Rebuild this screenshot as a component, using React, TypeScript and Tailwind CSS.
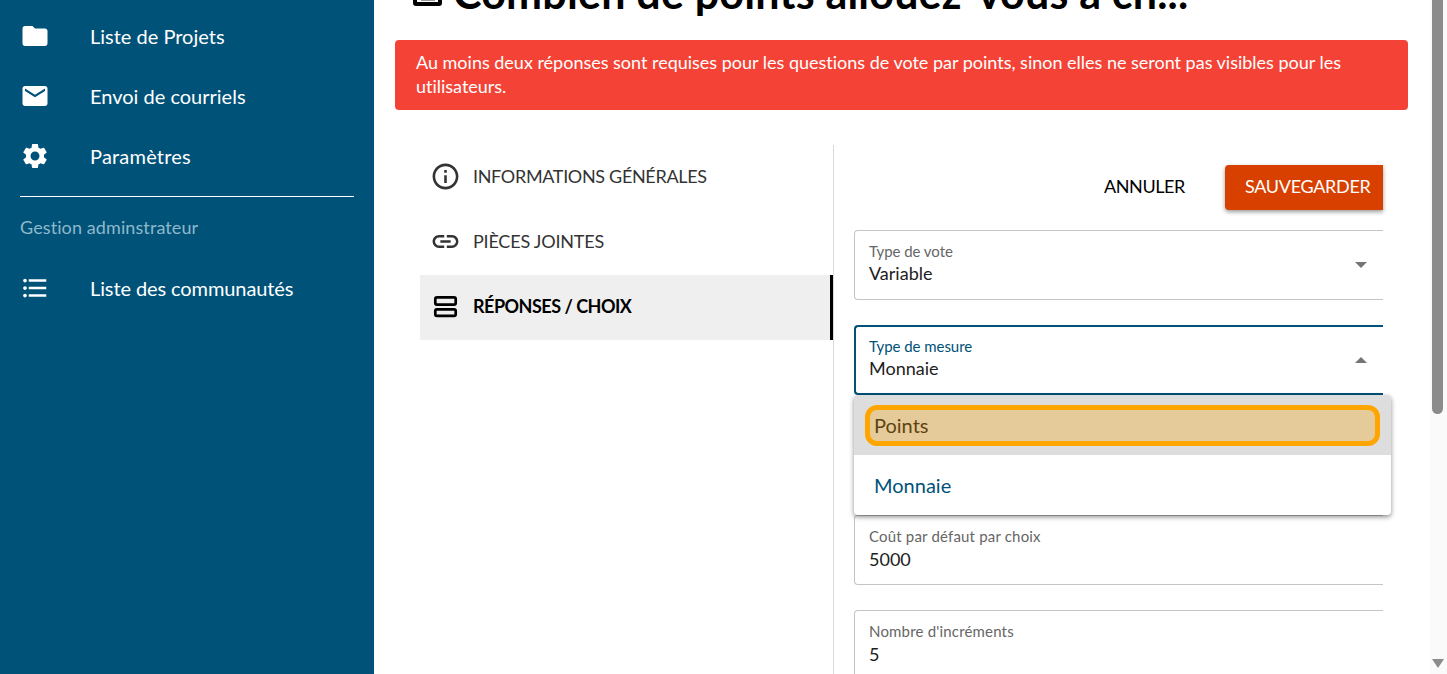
import { useState } from "react";

const LATO = "font-['Lato','Liberation_Sans',sans-serif]";

function MdIcon({ d, className = "" }: { d: string; className?: string }) {
  return (
    <svg aria-hidden="true" className={className} fill="currentColor" viewBox="0 0 24 24">
      <path d={d} />
    </svg>
  );
}

const icons = {
  folder: "M10 4H4c-1.1 0-1.99.9-1.99 2L2 18c0 1.1.9 2 2 2h16c1.1 0 2-.9 2-2V8c0-1.1-.9-2-2-2h-8l-2-2z",
  mail: "M20 4H4c-1.1 0-1.99.9-1.99 2L2 18c0 1.1.9 2 2 2h16c1.1 0 2-.9 2-2V6c0-1.1-.9-2-2-2zm0 4l-8 5-8-5V6l8 5 8-5v2z",
  gear: "M19.14 12.94c.04-.3.06-.61.06-.94 0-.32-.02-.64-.07-.94l2.03-1.58c.18-.14.23-.41.12-.61l-1.92-3.32c-.12-.22-.37-.29-.59-.22l-2.39.96c-.5-.38-1.03-.7-1.62-.94l-.36-2.54c-.04-.24-.24-.41-.48-.41h-3.84c-.24 0-.43.17-.47.41l-.36 2.54c-.59.24-1.13.57-1.62.94l-2.39-.96c-.22-.08-.47 0-.59.22L2.74 8.87c-.12.21-.08.47.12.61l2.03 1.58c-.05.3-.09.63-.09.94s.02.64.07.94l-2.03 1.58c-.18.14-.23.41-.12.61l1.92 3.32c.12.22.37.29.59.22l2.39-.96c.5.38 1.03.7 1.62.94l.36 2.54c.05.24.24.41.48.41h3.84c.24 0 .44-.17.47-.41l.36-2.54c.59-.24 1.13-.56 1.62-.94l2.39.96c.22.08.47 0 .59-.22l1.92-3.32c.12-.22.07-.47-.12-.61l-2.01-1.58zM12 15.6c-1.98 0-3.6-1.62-3.6-3.6s1.62-3.6 3.6-3.6 3.6 1.62 3.6 3.6-1.62 3.6-3.6 3.6z",
  list: "M4 10.5c-.83 0-1.5.67-1.5 1.5s.67 1.5 1.5 1.5 1.5-.67 1.5-1.5-.67-1.5-1.5-1.5zm0-6c-.83 0-1.5.67-1.5 1.5S3.17 7.5 4 7.5 5.5 6.83 5.5 6 4.83 4.5 4 4.5zm0 12c-.83 0-1.5.68-1.5 1.5s.68 1.5 1.5 1.5 1.5-.68 1.5-1.5-.67-1.5-1.5-1.5zM7 19h14v-2H7v2zm0-6h14v-2H7v2zm0-8v2h14V5H7z",
  info: "M11 7h2v2h-2zm0 4h2v6h-2zm1-9C6.48 2 2 6.48 2 12s4.48 10 10 10 10-4.48 10-10S17.52 2 12 2zm0 18c-4.41 0-8-3.59-8-8s3.59-8 8-8 8 3.59 8 8-3.59 8-8 8z",
  link: "M3.9 12c0-1.71 1.39-3.1 3.1-3.1h4V7H7c-2.76 0-5 2.24-5 5s2.24 5 5 5h4v-1.9H7c-1.71 0-3.1-1.39-3.1-3.1zM8 13h8v-2H8v2zm9-6h-4v1.9h4c1.71 0 3.1 1.39 3.1 3.1s-1.39 3.1-3.1 3.1h-4V17h4c2.76 0 5-2.24 5-5s-2.24-5-5-5z",
};

function NavItem({ icon, label, track = "" }: { icon: string; label: string; track?: string }) {
  return (
    <div className="flex h-[60px] items-center pl-[20px] text-white">
      <MdIcon d={icon} className="h-[30px] w-[30px]" />
      <span className={`ml-[40px] text-[20px] ${track}`}>{label}</span>
    </div>
  );
}

function Field({ label, value, open = false, select = false }: { label: string; value: string; open?: boolean; select?: boolean }) {
  return (
    <div
      className={`relative h-[70px] rounded-l ${
        open ? "border-y-2 border-l-2 border-[#005278] pl-[13px] pt-[10px]" : "border-y border-l border-[#c4c4c4] pl-[14px] pt-[11px]"
      }`}
    >
      <div className={`text-[15px] leading-[18px] ${open ? "text-[#005278]" : "text-[#666666]"} ${select ? "tracking-[-0.05px]" : "tracking-[0.18px]"}`}>
        {label}
      </div>
      <div className={`text-[18px] leading-[24px] text-[#212121] ${select ? "mt-[1px]" : "mt-[2px]"}`}>{value}</div>
      {select && (
        <span
          className={`absolute right-[16px] h-0 w-0 border-x-[6px] border-x-transparent ${
            open ? "top-[30px] border-b-[6px] border-b-[#757575]" : "top-[31px] border-t-[6px] border-t-[#757575]"
          }`}
        />
      )}
    </div>
  );
}

export default function App() {
  const [tab] = useState("reponses");

  return (
    <div className={`flex h-[674px] w-[1447px] overflow-hidden bg-white ${LATO}`}>
      <aside className="w-[374px] shrink-0 bg-[#005278] pt-[6px]">
        <NavItem icon={icons.folder} label="Liste de Projets" />
        <NavItem icon={icons.mail} label="Envoi de courriels" />
        <NavItem icon={icons.gear} label="Paramètres" track="tracking-[0.2px]" />
        <div className="mx-[20px] mt-[10px] h-px w-[334px] bg-white" />
        <div className="ml-[20px] mt-[19px] text-[18px] leading-[22px] tracking-[0.1px] text-[#8fb8cb]">Gestion adminstrateur</div>
        <div className="mt-[20px]">
          <NavItem icon={icons.list} label="Liste des communautés" track="tracking-[-0.1px]" />
        </div>
      </aside>

      <main className="relative min-w-0 flex-1 overflow-hidden">
        <div className="h-[40px] overflow-hidden pl-[39px]">
          <div className="-mt-[27px] flex h-[40px] items-center">
            <span className="mr-[11px] flex h-[26px] w-[29px] items-end justify-center rounded-[3px] border-[4px] border-black pb-[1px]">
              <span className="h-[2px] w-[14px] bg-[#9a9a9a]" />
            </span>
            <h1 className="whitespace-nowrap text-[43px] font-bold leading-[40px] tracking-[0.2px] text-black">Combien de points allouez-vous à ch...</h1>
          </div>
        </div>

        <div className="ml-[21px] mr-[39px] h-[70px] rounded bg-[#f44336] px-[21px] py-[10px] text-[18px] leading-[24px] tracking-[-0.01px] text-white">
          Au moins deux réponses sont requises pour les questions de vote par points, sinon elles ne seront pas visibles pour les utilisateurs.
        </div>

        <div className="ml-[46px] mt-[35px] flex">
          <nav className="w-[414px] border-r border-[#d9d9d9] pb-[400px]">
            <div className="flex h-[65px] items-center pb-[2px] pl-[10px] text-[#333333]">
              <MdIcon d={icons.info} className="h-[31px] w-[31px]" />
              <span className="ml-[12px] text-[18px] uppercase tracking-[-0.33px]">Informations générales</span>
            </div>
            <div className="flex h-[65px] items-center pb-[2px] pl-[10px] text-[#333333]">
              <MdIcon d={icons.link} className="h-[31px] w-[31px]" />
              <span className="ml-[12px] text-[18px] uppercase tracking-[-0.2px]">Pièces jointes</span>
            </div>
            <div className={`flex h-[65px] items-center border-r-[3px] border-black bg-[#efefef] pb-[2px] pl-[10px] text-black ${tab === "reponses" ? "" : "hidden"}`}>
              <svg aria-hidden="true" className="h-[31px] w-[31px]" fill="none" stroke="currentColor" strokeWidth="2.7" viewBox="0 0 31 31">
                <rect height="7.4" rx="1.6" width="20.4" x="5.3" y="6.3" />
                <rect height="6.6" rx="1.6" width="20.4" x="5.3" y="18.3" />
              </svg>
              <span className="ml-[12px] text-[18px] font-bold uppercase tracking-[-0.5px]">Réponses / choix</span>
            </div>
          </nav>

          <section className="ml-[20px] w-[529px] shrink-0">
            <div className="mt-[20px] flex h-[45px] items-center justify-end">
              <span className="mb-[2px] mr-[40px] text-[18px] uppercase tracking-[-0.4px] text-black">Annuler</span>
              <span className="flex h-[45px] w-[158px] items-center rounded-l bg-[#d84000] pb-[2px] pl-[20px] text-[18px] uppercase tracking-[-0.3px] text-white shadow-[0_2px_4px_rgba(0,0,0,0.4)]">
                Sauvegarder
              </span>
            </div>
            <div className="mt-[20px] flex flex-col gap-[25px]">
              <Field label="Type de vote" value="Variable" select />
              <Field label="Type de mesure" value="Monnaie" select open />
              <div className="h-[70px]" />
              <Field label="Coût par défaut par choix" value="5000" />
              <Field label="Nombre d'incréments" value="5" />
            </div>
          </section>
        </div>

        {/* menu ouvert par-dessus les champs */}
        <div className="absolute left-[480px] top-[395px] w-[537px] overflow-hidden rounded bg-white shadow-[0_2px_5px_rgba(0,0,0,0.45)]">
          <div className="flex h-[60px] items-center bg-[#dddddd] px-[11px]">
            <div className="flex h-[41px] w-full items-center rounded-[12px] border-[5px] border-[#ffa500] bg-[#e5cb99] pl-[4px] text-[20px] text-[#61430f]">
              Points
            </div>
          </div>
          <div className="flex h-[60px] items-center pl-[20px] text-[20px] text-[#005278]">Monnaie</div>
        </div>

        {/* barre de défilement */}
        <div className="absolute right-0 top-0 flex h-full w-[17px] flex-col items-start justify-between bg-[#fafafa] pb-[6px] pl-[2px]">
          <div className="h-[414px] w-[11px] rounded-b-full bg-[#8b8b8b]" />
          <span className="h-0 w-0 border-x-[6px] border-t-[9px] border-x-transparent border-t-[#8b8b8b]" />
        </div>
      </main>
    </div>
  );
}
